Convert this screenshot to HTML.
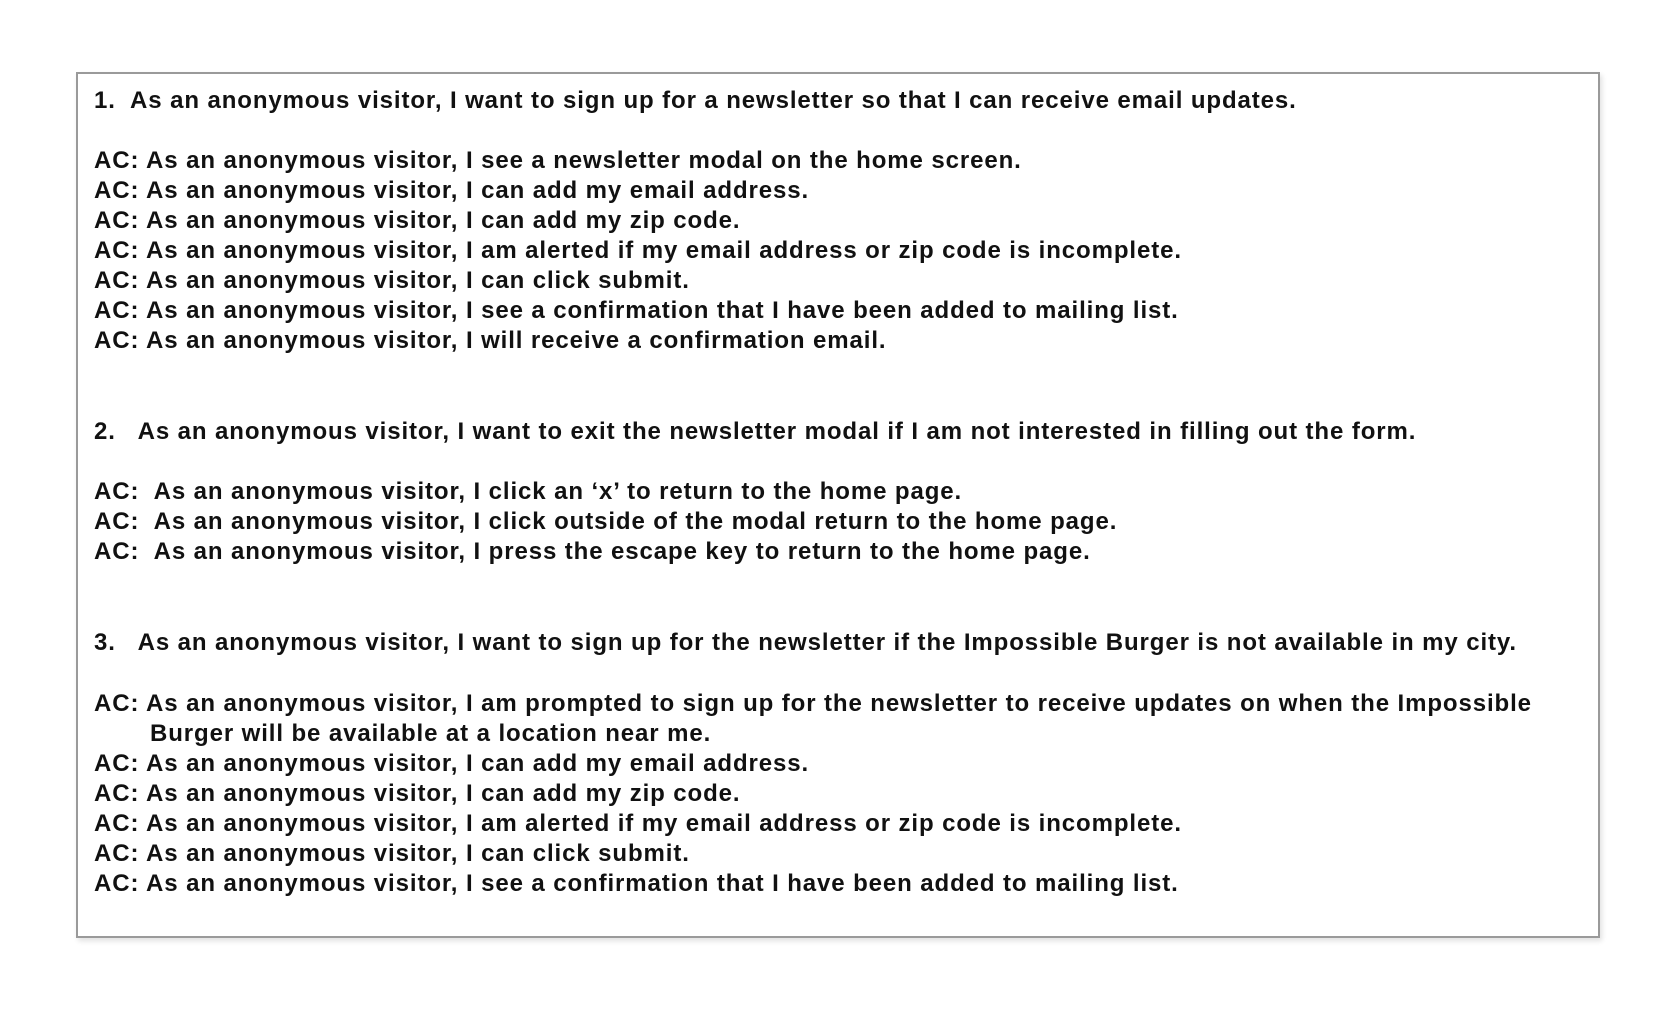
<!DOCTYPE html>
<html><head><meta charset="utf-8"><style>
html,body{margin:0;padding:0;background:#fff;width:1663px;height:1024px;overflow:hidden}
.box{position:absolute;left:76px;top:72px;width:1520px;height:862px;border:2px solid #9a9a9a;box-shadow:2px 3px 5px rgba(0,0,0,0.12);background:#fff}
.l{position:absolute;left:94px;white-space:pre;font-family:"Liberation Sans",sans-serif;font-weight:bold;font-size:24px;line-height:30px;color:#111;letter-spacing:0.9px}
</style></head><body>
<div class="box"></div>
<div class="l" style="top:86px">1.  As an anonymous visitor, I want to sign up for a newsletter so that I can receive email updates.</div>
<div class="l" style="top:146px">AC: As an anonymous visitor, I see a newsletter modal on the home screen.</div>
<div class="l" style="top:176px">AC: As an anonymous visitor, I can add my email address.</div>
<div class="l" style="top:206px">AC: As an anonymous visitor, I can add my zip code.</div>
<div class="l" style="top:236px">AC: As an anonymous visitor, I am alerted if my email address or zip code is incomplete.</div>
<div class="l" style="top:266px">AC: As an anonymous visitor, I can click submit.</div>
<div class="l" style="top:296px">AC: As an anonymous visitor, I see a confirmation that I have been added to mailing list.</div>
<div class="l" style="top:326px">AC: As an anonymous visitor, I will receive a confirmation email.</div>
<div class="l" style="top:417px">2.   As an anonymous visitor, I want to exit the newsletter modal if I am not interested in filling out the form.</div>
<div class="l" style="top:477px">AC:  As an anonymous visitor, I click an ‘x’ to return to the home page.</div>
<div class="l" style="top:507px">AC:  As an anonymous visitor, I click outside of the modal return to the home page.</div>
<div class="l" style="top:537px">AC:  As an anonymous visitor, I press the escape key to return to the home page.</div>
<div class="l" style="top:628px">3.   As an anonymous visitor, I want to sign up for the newsletter if the Impossible Burger is not available in my city.</div>
<div class="l" style="top:689px">AC: As an anonymous visitor, I am prompted to sign up for the newsletter to receive updates on when the Impossible</div>
<div class="l" style="top:719px;left:150px">Burger will be available at a location near me.</div>
<div class="l" style="top:749px">AC: As an anonymous visitor, I can add my email address.</div>
<div class="l" style="top:779px">AC: As an anonymous visitor, I can add my zip code.</div>
<div class="l" style="top:809px">AC: As an anonymous visitor, I am alerted if my email address or zip code is incomplete.</div>
<div class="l" style="top:839px">AC: As an anonymous visitor, I can click submit.</div>
<div class="l" style="top:869px">AC: As an anonymous visitor, I see a confirmation that I have been added to mailing list.</div>
</body></html>
